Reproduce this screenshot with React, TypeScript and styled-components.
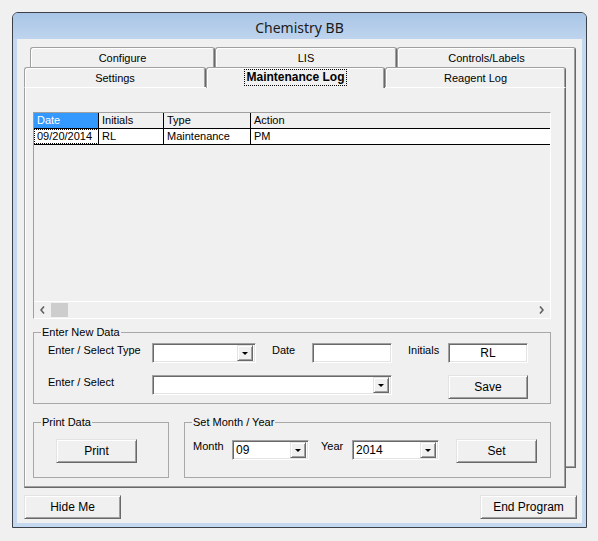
import React from 'react'
import styled, { createGlobalStyle } from 'styled-components'

const GlobalStyle = createGlobalStyle`
  html, body {
    margin: 0;
    padding: 0;
    background: #f0f0f0;
  }
  body {
    font-family: "Liberation Sans", Arial, sans-serif;
    font-size: 11px;
    color: #000;
  }
  * {
    box-sizing: border-box;
  }
`

const Desktop = styled.div`
  width: 598px;
  height: 541px;
  padding: 12px 0 0 12px;
  background: #f0f0f0;
`

const Window = styled.div`
  width: 575px;
  height: 516px;
  border: 1px solid #3c4149;
  border-radius: 6px 6px 0 0;
  background: #c4d9f0;
  display: flex;
  flex-direction: column;
  overflow: hidden;
`

const TitleBar = styled.div`
  height: 26px;
  flex: none;
  display: flex;
  align-items: center;
  justify-content: center;
  background: linear-gradient(#a9c5e6, #bed4ee);
  font-family: "Noto Sans", "Open Sans", sans-serif;
  font-size: 14px;
  color: #1b1b1b;
  padding-top: 2px;
`

const Frame = styled.div`
  flex: 1;
  padding: 0 4px 4px 4px;
  display: flex;
`

const Client = styled.div`
  flex: 1;
  background: #f0f0f0;
  padding: 8px 5px 0 7px;
  display: flex;
  flex-direction: column;
`

/* ---- tab control ---- */

const TabArea = styled.div`
  display: grid;
  width: 552px;
`

const BackLayer = styled.div`
  grid-area: 1 / 1;
  margin-left: 6px;
  width: 546px;
  height: 421px;
  display: flex;
  flex-direction: column;
`

const FrontLayer = styled.div`
  grid-area: 1 / 1;
  margin-top: 20px;
  width: 542px;
  height: 421px;
  display: flex;
  flex-direction: column;
`

const TabRow = styled.div`
  display: flex;
  align-items: flex-end;
  height: 20px;
  flex: none;
`

const Tab = styled.div<{ $w: number; $active?: boolean }>`
  width: ${p => p.$w}px;
  height: ${p => (p.$active ? 21 : 20)}px;
  margin-bottom: ${p => (p.$active ? -1 : 0)}px;
  position: relative;
  z-index: ${p => (p.$active ? 2 : 1)};
  flex: none;
  display: flex;
  align-items: center;
  justify-content: center;
  background: #f0f0f0;
  border-top: 1px solid #a0a0a0;
  border-left: 1px solid #a0a0a0;
  border-right: 1px solid #696969;
  box-shadow: inset 1px 1px 0 #fff, inset -1px 0 0 #a0a0a0;
  border-radius: 3px 3px 0 0;
  font-weight: ${p => (p.$active ? 'bold' : 'normal')};
  font-size: ${p => (p.$active ? 12 : 11)}px;
  padding-bottom: ${p => (p.$active ? 1 : 0)}px;
`

const FocusText = styled.span`
  outline: 1px dotted #000;
  padding: 0 1px;
  line-height: 15px;
`

const BackSheet = styled.div`
  flex: 1;
  border-right: 1px solid #696969;
  border-bottom: 1px solid #696969;
  box-shadow: inset -1px -1px 0 #a0a0a0;
`

const Panel = styled.div`
  flex: 1;
  background: #f0f0f0;
  border-top: 1px solid #fff;
  border-left: 1px solid #a0a0a0;
  border-right: 1px solid #696969;
  border-bottom: 1px solid #696969;
  box-shadow: inset -1px -1px 0 #a0a0a0, inset 1px 0 0 #fff;
  padding: 24px 0 0 8px;
  display: flex;
  flex-direction: column;
`

/* ---- list view ---- */

const ListView = styled.div`
  width: 518px;
  height: 207px;
  border: 1px solid;
  border-color: #a0a0a0 #fff #fff #a0a0a0;
  display: flex;
  flex-direction: column;
  flex: none;
`

const GridRow = styled.div<{ $body?: boolean }>`
  display: grid;
  grid-template-columns: 65px 65px 87px 1fr;
  border-bottom: 1px solid #000;
  background: ${p => (p.$body ? '#fff' : 'transparent')};
`

const Cell = styled.div<{ $selected?: boolean; $focus?: boolean; $last?: boolean }>`
  height: 15px;
  line-height: 15px;
  padding-left: 3px;
  white-space: nowrap;
  border-right: ${p => (p.$last ? 'none' : '1px solid #000')};
  background: ${p => (p.$selected ? '#3399ff' : 'transparent')};
  color: ${p => (p.$selected ? '#fff' : '#000')};
  outline: ${p => (p.$focus ? '1px dotted #000' : 'none')};
  outline-offset: -1px;
`

const HScroll = styled.div`
  margin-top: auto;
  height: 17px;
  border-top: 1px solid #fff;
  display: flex;
  align-items: center;
`

const ScrollArrow = styled.div`
  width: 17px;
  height: 16px;
  display: flex;
  align-items: center;
  justify-content: center;
  flex: none;
`

const Thumb = styled.div`
  width: 17px;
  height: 14px;
  background: #cdcdcd;
  margin-right: auto;
`

/* ---- group boxes & controls ---- */

const GroupBox = styled.fieldset<{ $w: number; $mt: number }>`
  margin: ${p => p.$mt}px 0 0 0;
  width: ${p => p.$w}px;
  padding: 0;
  border: 1px solid #a8a8a8;
  min-width: 0;
  flex: none;
`

const Legend = styled.legend`
  margin-left: 7px;
  padding: 0 1px;
  line-height: 13px;
  font-size: 11px;
`

const GroupBody = styled.div<{ $pad: string }>`
  padding: ${p => p.$pad};
`

const FieldRow = styled.div<{ $mt?: number }>`
  display: flex;
  align-items: flex-start;
  margin-top: ${p => p.$mt ?? 0}px;
`

const Label = styled.div<{ $w: number; $ml?: number }>`
  width: ${p => p.$w}px;
  margin-left: ${p => p.$ml ?? 0}px;
  padding-top: 1px;
  line-height: 13px;
  flex: none;
  white-space: nowrap;
`

const TextBox = styled.div<{ $w: number; $center?: boolean }>`
  width: ${p => p.$w}px;
  height: 20px;
  flex: none;
  background: #fff;
  border: 1px solid;
  border-color: #a0a0a0 #fff #fff #a0a0a0;
  box-shadow: inset 1px 1px 0 #696969, inset -1px -1px 0 #e3e3e3;
  display: flex;
  align-items: center;
  justify-content: ${p => (p.$center ? 'center' : 'flex-start')};
  padding: 0 3px;
  font-size: 12px;
`

const ComboBox = styled(TextBox)<{ $mt?: number }>`
  justify-content: space-between;
  padding: 0 2px 0 3px;
  margin-top: ${p => p.$mt ?? 0}px;
`

const DropButton = styled.div`
  width: 16px;
  height: 16px;
  background: #f0f0f0;
  border: 1px solid;
  border-color: #e3e3e3 #696969 #696969 #e3e3e3;
  box-shadow: inset 1px 1px 0 #fff, inset -1px -1px 0 #a0a0a0;
  display: flex;
  align-items: center;
  justify-content: center;
  flex: none;

  &::after {
    content: "";
    border-top: 3px solid #000;
    border-left: 3.5px solid transparent;
    border-right: 3.5px solid transparent;
    margin-top: 1px;
  }
`

const Button = styled.div<{ $w: number; $ml?: number }>`
  width: ${p => p.$w}px;
  height: 24px;
  margin-left: ${p => p.$ml ?? 0}px;
  flex: none;
  background: #f0f0f0;
  border: 1px solid;
  border-color: #e3e3e3 #696969 #696969 #e3e3e3;
  box-shadow: inset 1px 1px 0 #fff, inset -1px -1px 0 #a0a0a0;
  display: flex;
  align-items: center;
  justify-content: center;
  font-size: 12px;
`

const BottomRow = styled.div`
  display: flex;
  gap: 15px;
`

const FooterRow = styled.div`
  margin-top: 7px;
  display: flex;
  justify-content: space-between;
`

const Chevron = ({ dir }: { dir: 'left' | 'right' }) => (
  <svg width="5" height="8" viewBox="0 0 5 8">
    <polyline
      points={dir === 'left' ? '4,0.5 1,4 4,7.5' : '1,0.5 4,4 1,7.5'}
      fill="none"
      stroke="#606060"
      strokeWidth="1.6"
    />
  </svg>
)

const backTabs = [
  { label: 'Configure', w: 185 },
  { label: 'LIS', w: 182 },
  { label: 'Controls/Labels', w: 179 },
]

const frontTabs = [
  { label: 'Settings', w: 182 },
  { label: 'Maintenance Log', w: 179, active: true },
  { label: 'Reagent Log', w: 181 },
]

const headers = ['Date', 'Initials', 'Type', 'Action']
const logRows = [['09/20/2014', 'RL', 'Maintenance', 'PM']]

export default function App() {
  return (
    <Desktop>
      <GlobalStyle />
      <Window>
        <TitleBar>Chemistry BB</TitleBar>
        <Frame>
          <Client>
            <TabArea>
              <BackLayer>
                <TabRow>
                  {backTabs.map(t => (
                    <Tab key={t.label} $w={t.w}>{t.label}</Tab>
                  ))}
                </TabRow>
                <BackSheet />
              </BackLayer>
              <FrontLayer>
                <TabRow>
                  {frontTabs.map(t => (
                    <Tab key={t.label} $w={t.w} $active={t.active}>
                      {t.active ? <FocusText>{t.label}</FocusText> : t.label}
                    </Tab>
                  ))}
                </TabRow>
                <Panel>
                  <ListView>
                    <GridRow>
                      {headers.map((h, i) => (
                        <Cell key={h} $selected={i === 0} $last={i === headers.length - 1}>{h}</Cell>
                      ))}
                    </GridRow>
                    {logRows.map((r, ri) => (
                      <GridRow key={ri} $body>
                        {r.map((c, i) => (
                          <Cell key={i} $focus={i === 0} $last={i === r.length - 1}>{c}</Cell>
                        ))}
                      </GridRow>
                    ))}
                    <HScroll>
                      <ScrollArrow><Chevron dir="left" /></ScrollArrow>
                      <Thumb />
                      <ScrollArrow><Chevron dir="right" /></ScrollArrow>
                    </HScroll>
                  </ListView>

                  <GroupBox $w={518} $mt={7}>
                    <Legend>Enter New Data</Legend>
                    <GroupBody $pad="4px 0 4px 14px">
                      <FieldRow>
                        <Label $w={104}>Enter / Select Type</Label>
                        <ComboBox $w={104}><span /><DropButton /></ComboBox>
                        <Label $w={40} $ml={16}>Date</Label>
                        <TextBox $w={80} />
                        <Label $w={40} $ml={16}>Initials</Label>
                        <TextBox $w={80} $center>RL</TextBox>
                      </FieldRow>
                      <FieldRow $mt={12}>
                        <Label $w={104}>Enter / Select</Label>
                        <ComboBox $w={240}><span /><DropButton /></ComboBox>
                        <Button $w={80} $ml={56}>Save</Button>
                      </FieldRow>
                    </GroupBody>
                  </GroupBox>

                  <BottomRow>
                    <GroupBox $w={136} $mt={12}>
                      <Legend>Print Data</Legend>
                      <GroupBody $pad="10px 0 14px 22px">
                        <Button $w={81}>Print</Button>
                      </GroupBody>
                    </GroupBox>
                    <GroupBox $w={367} $mt={12}>
                      <Legend>Set Month / Year</Legend>
                      <GroupBody $pad="10px 0 14px 8px">
                        <FieldRow>
                          <Label $w={39}>Month</Label>
                          <ComboBox $w={77} $mt={1}><span>09</span><DropButton /></ComboBox>
                          <Label $w={31} $ml={12}>Year</Label>
                          <ComboBox $w={87} $mt={1}><span>2014</span><DropButton /></ComboBox>
                          <Button $w={81} $ml={17}>Set</Button>
                        </FieldRow>
                      </GroupBody>
                    </GroupBox>
                  </BottomRow>
                </Panel>
              </FrontLayer>
            </TabArea>
            <FooterRow>
              <Button $w={97}>Hide Me</Button>
              <Button $w={97}>End Program</Button>
            </FooterRow>
          </Client>
        </Frame>
      </Window>
    </Desktop>
  )
}
